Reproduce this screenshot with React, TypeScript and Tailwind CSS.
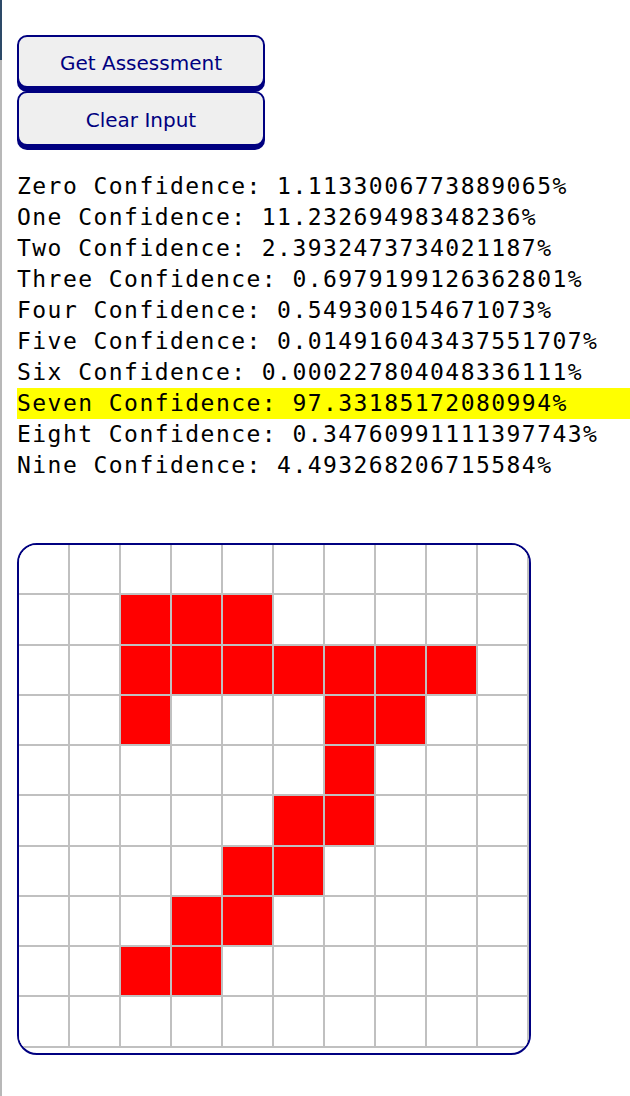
import React from "react";

const confidences: { label: string; value: string; top?: boolean }[] = [
  { label: "Zero", value: "1.1133006773889065" },
  { label: "One", value: "11.23269498348236" },
  { label: "Two", value: "2.3932473734021187" },
  { label: "Three", value: "0.6979199126362801" },
  { label: "Four", value: "0.549300154671073" },
  { label: "Five", value: "0.014916043437551707" },
  { label: "Six", value: "0.000227804048336111" },
  { label: "Seven", value: "97.33185172080994", top: true },
  { label: "Eight", value: "0.34760991111397743" },
  { label: "Nine", value: "4.493268206715584" },
];

// filled cells of the 10x10 drawing pad, "row,col"
const filled = new Set([
  "1,2", "1,3", "1,4",
  "2,2", "2,3", "2,4", "2,5", "2,6", "2,7", "2,8",
  "3,2", "3,6", "3,7",
  "4,6",
  "5,5", "5,6",
  "6,4", "6,5",
  "7,3", "7,4",
  "8,2", "8,3",
]);

function PadButton({ children }: { children: React.ReactNode }) {
  return (
    <button
      type="button"
      className="block w-[248px] rounded-[10px] border-2 border-[#000080] bg-[#efefef] text-[20px] text-[#000080] shadow-[0_4px_0_#000080] font-['DejaVu_Sans',Verdana,sans-serif]"
    >
      {children}
    </button>
  );
}

export default function App() {
  const cells = [];
  for (let r = 0; r < 10; r++) {
    for (let c = 0; c < 10; c++) {
      cells.push(
        <div
          key={`${r}-${c}`}
          className={filled.has(`${r},${c}`) ? "bg-[#ff0000]" : "bg-white"}
        />
      );
    }
  }

  return (
    <div className="flex min-h-[1096px] bg-white">
      {/* window edge */}
      <div className="flex w-[2px] flex-col">
        <div className="h-[60px] bg-[#2d4a68]" />
        <div className="flex-1 bg-[#b8b8b8]" />
      </div>

      <div className="flex-1 pl-[15px] pt-[35px]">
        <div className="flex flex-col">
          <div className="h-[56px]">
            <PadButton>
              <span className="flex h-[49px] items-center justify-center pt-[3px]">Get Assessment</span>
            </PadButton>
          </div>
          <PadButton>
            <span className="flex h-[51px] items-center justify-center pt-[2px]">Clear Input</span>
          </PadButton>
        </div>

        <div className="mt-[25px] font-['DejaVu_Sans_Mono',monospace] text-[23px] leading-[31px] tracking-[1.45px] text-black">
          {confidences.map((c) => (
            <div key={c.label} className={c.top ? "bg-[#ffff00]" : ""}>
              {c.label} Confidence: {c.value}%
            </div>
          ))}
        </div>

        <div className="mt-[62px] h-[512px] w-[514px] overflow-hidden rounded-[20px] border-2 border-[#000080] bg-white">
          <div className="grid w-[510px] grid-cols-[repeat(10,49px)] grid-rows-[repeat(10,48.25px)] gap-[2px] bg-[#c0c0c0] pb-[2px] pr-[2px]">
            {cells}
          </div>
        </div>
      </div>
    </div>
  );
}
